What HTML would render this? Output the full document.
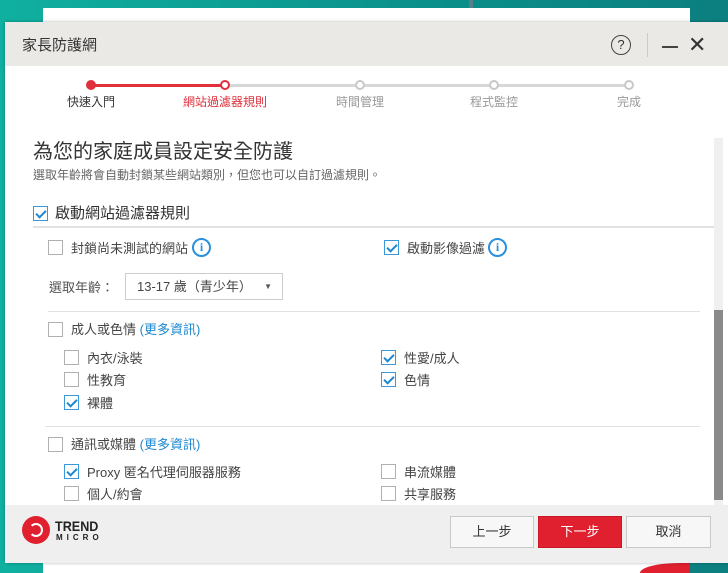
<!DOCTYPE html>
<html><head><meta charset="utf-8"><style>
*{margin:0;padding:0;box-sizing:border-box}
body{width:728px;height:573px;overflow:hidden;position:relative;font-family:"Liberation Sans","Noto Sans CJK TC",sans-serif;background:linear-gradient(90deg,#10b0a0,#0a8f8a 60%,#0c7f80);color:#333}
.a{position:absolute;white-space:nowrap}
.cb{position:absolute;width:15px;height:15px;border:1px solid #b0b0b0;background:#fff}
.cb.on{border-color:#3a9ad9}
.cb.on:after{content:"";position:absolute;left:4px;top:1px;width:4px;height:8px;border:solid #1e88d0;border-width:0 2px 2px 0;transform:rotate(45deg)}
.t{font-size:13px;color:#444}
.info{position:absolute;width:19px;height:19px;border:2px solid #2a8fdc;border-radius:50%;color:#2a8fdc;font:bold 12px/15px "Liberation Serif",serif;text-align:center}
.ln{position:absolute;height:1px;background:#e2e2e2}
.dot{position:absolute;top:80px;width:10px;height:10px;border-radius:50%;border:2px solid #c8c8c8;background:#fff}
.pl{position:absolute;top:93px;font-size:12px;color:#999;transform:translateX(-50%)}
.btn{position:absolute;top:516px;height:32px;border:1px solid #c8c8c8;background:#f7f7f7;font-size:13px;text-align:center;line-height:30px;color:#333}
a{color:#1e88d0}
</style></head><body>
<div class="a" style="left:43px;top:8px;width:647px;height:14px;background:#fff"></div>
<div class="a" style="left:43px;top:563px;width:647px;height:10px;background:#fff"></div>
<div class="a" style="left:640px;top:563px;width:50px;height:10px;background:#e0202e;border-top-left-radius:40px 10px"></div>
<div class="a" style="left:469px;top:0;width:4px;height:8px;background:#5a7f88"></div>
<div class="a" style="left:5px;top:22px;width:723px;height:541px;background:#fff;box-shadow:0 0 3px rgba(0,0,0,.3)"></div>
<div class="a" style="left:5px;top:22px;width:723px;height:44px;background:#ebe9e5"></div>
<div class="a" style="left:22px;top:34px;font-size:15px;color:#333">家長防護網</div>
<div class="a" style="left:611px;top:35px;width:20px;height:20px;border:1.5px solid #444;border-radius:50%;font-size:13px;text-align:center;line-height:17px;color:#333">?</div>
<div class="a" style="left:647px;top:33px;width:1px;height:24px;background:#ccc"></div>
<div class="a" style="left:662px;top:46px;width:16px;height:2px;background:#444"></div>
<div class="a" style="left:688px;top:32px;font-size:22px;color:#333;font-weight:300">✕</div>

<div class="a" style="left:91px;top:84px;width:538px;height:3px;background:#d8d8d8"></div>
<div class="a" style="left:91px;top:84px;width:134px;height:3px;background:#e0303c"></div>
<div class="dot" style="left:86px;background:#e0303c;border-color:#e0303c"></div>
<div class="dot" style="left:220px;border-color:#e0303c"></div>
<div class="dot" style="left:355px"></div>
<div class="dot" style="left:489px"></div>
<div class="dot" style="left:624px"></div>
<div class="pl" style="left:91px;color:#333">快速入門</div>
<div class="pl" style="left:225px;color:#e0303c">網站過濾器規則</div>
<div class="pl" style="left:360px">時間管理</div>
<div class="pl" style="left:494px">程式監控</div>
<div class="pl" style="left:629px">完成</div>

<div class="a" style="left:33px;top:135px;font-size:20px;color:#333">為您的家庭成員設定安全防護</div>
<div class="a" style="left:33px;top:166px;font-size:12px;color:#666">選取年齡將會自動封鎖某些網站類別，但您也可以自訂過濾規則。</div>
<div class="cb on" style="left:33px;top:206px"></div>
<div class="a" style="left:55px;top:202px;font-size:15px;color:#333">啟動網站過濾器規則</div>
<div class="ln" style="left:33px;top:226px;width:681px;height:2px"></div>

<div class="cb" style="left:48px;top:240px"></div>
<div class="a t" style="left:71px;top:238px">封鎖尚未測試的網站</div>
<div class="info" style="left:192px;top:238px">i</div>
<div class="cb on" style="left:384px;top:240px"></div>
<div class="a t" style="left:407px;top:238px">啟動影像過濾</div>
<div class="info" style="left:488px;top:238px">i</div>

<div class="a t" style="left:49px;top:277px;color:#555">選取年齡：</div>
<div class="a" style="left:125px;top:273px;width:158px;height:27px;border:1px solid #ccc;font-size:13px;line-height:25px;padding-left:11px;color:#444">13-17 歲（青少年）<span style="position:absolute;right:10px;top:0;font-size:8px;color:#555">▼</span></div>
<div class="ln" style="left:48px;top:311px;width:652px"></div>

<div class="cb" style="left:48px;top:322px"></div>
<div class="a t" style="left:71px;top:319px">成人或色情 <a>(更多資訊)</a></div>
<div class="cb" style="left:64px;top:350px"></div><div class="a t" style="left:87px;top:348px">內衣/泳裝</div>
<div class="cb on" style="left:381px;top:350px"></div><div class="a t" style="left:404px;top:348px">性愛/成人</div>
<div class="cb" style="left:64px;top:372px"></div><div class="a t" style="left:87px;top:370px">性教育</div>
<div class="cb on" style="left:381px;top:372px"></div><div class="a t" style="left:404px;top:370px">色情</div>
<div class="cb on" style="left:64px;top:395px"></div><div class="a t" style="left:87px;top:393px">裸體</div>
<div class="ln" style="left:45px;top:426px;width:655px"></div>

<div class="cb" style="left:48px;top:437px"></div>
<div class="a t" style="left:71px;top:434px">通訊或媒體 <a>(更多資訊)</a></div>
<div class="cb on" style="left:64px;top:464px"></div><div class="a t" style="left:87px;top:462px">Proxy 匿名代理伺服器服務</div>
<div class="cb" style="left:381px;top:464px"></div><div class="a t" style="left:404px;top:462px">串流媒體</div>
<div class="cb" style="left:64px;top:486px"></div><div class="a t" style="left:87px;top:484px">個人/約會</div>
<div class="cb" style="left:381px;top:486px"></div><div class="a t" style="left:404px;top:484px">共享服務</div>

<div class="a" style="left:714px;top:138px;width:9px;height:367px;background:#f0f0f0"></div>
<div class="a" style="left:714px;top:310px;width:9px;height:190px;background:#8a8a8a"></div>

<div class="a" style="left:5px;top:505px;width:723px;height:58px;background:#efefef"></div>
<div class="a" style="left:22px;top:516px;width:28px;height:28px;border-radius:50%;background:#e0202e"></div>
<div class="a" style="left:29px;top:523px;width:14px;height:14px;border-radius:50%;border:2px solid #fff;border-left-color:transparent"></div>
<div class="a" style="left:55px;top:518px;font-size:14px;font-weight:bold;color:#222;transform:scaleX(.9);transform-origin:left">TREND</div>
<div class="a" style="left:56px;top:533px;font-size:8px;font-weight:bold;color:#222;letter-spacing:4px">MICRO</div>
<div class="btn" style="left:450px;width:84px">上一步</div>
<div class="btn" style="left:538px;width:84px;background:#e0202e;border-color:#c81a26;color:#fff">下一步</div>
<div class="btn" style="left:626px;width:85px">取消</div>
</body></html>
